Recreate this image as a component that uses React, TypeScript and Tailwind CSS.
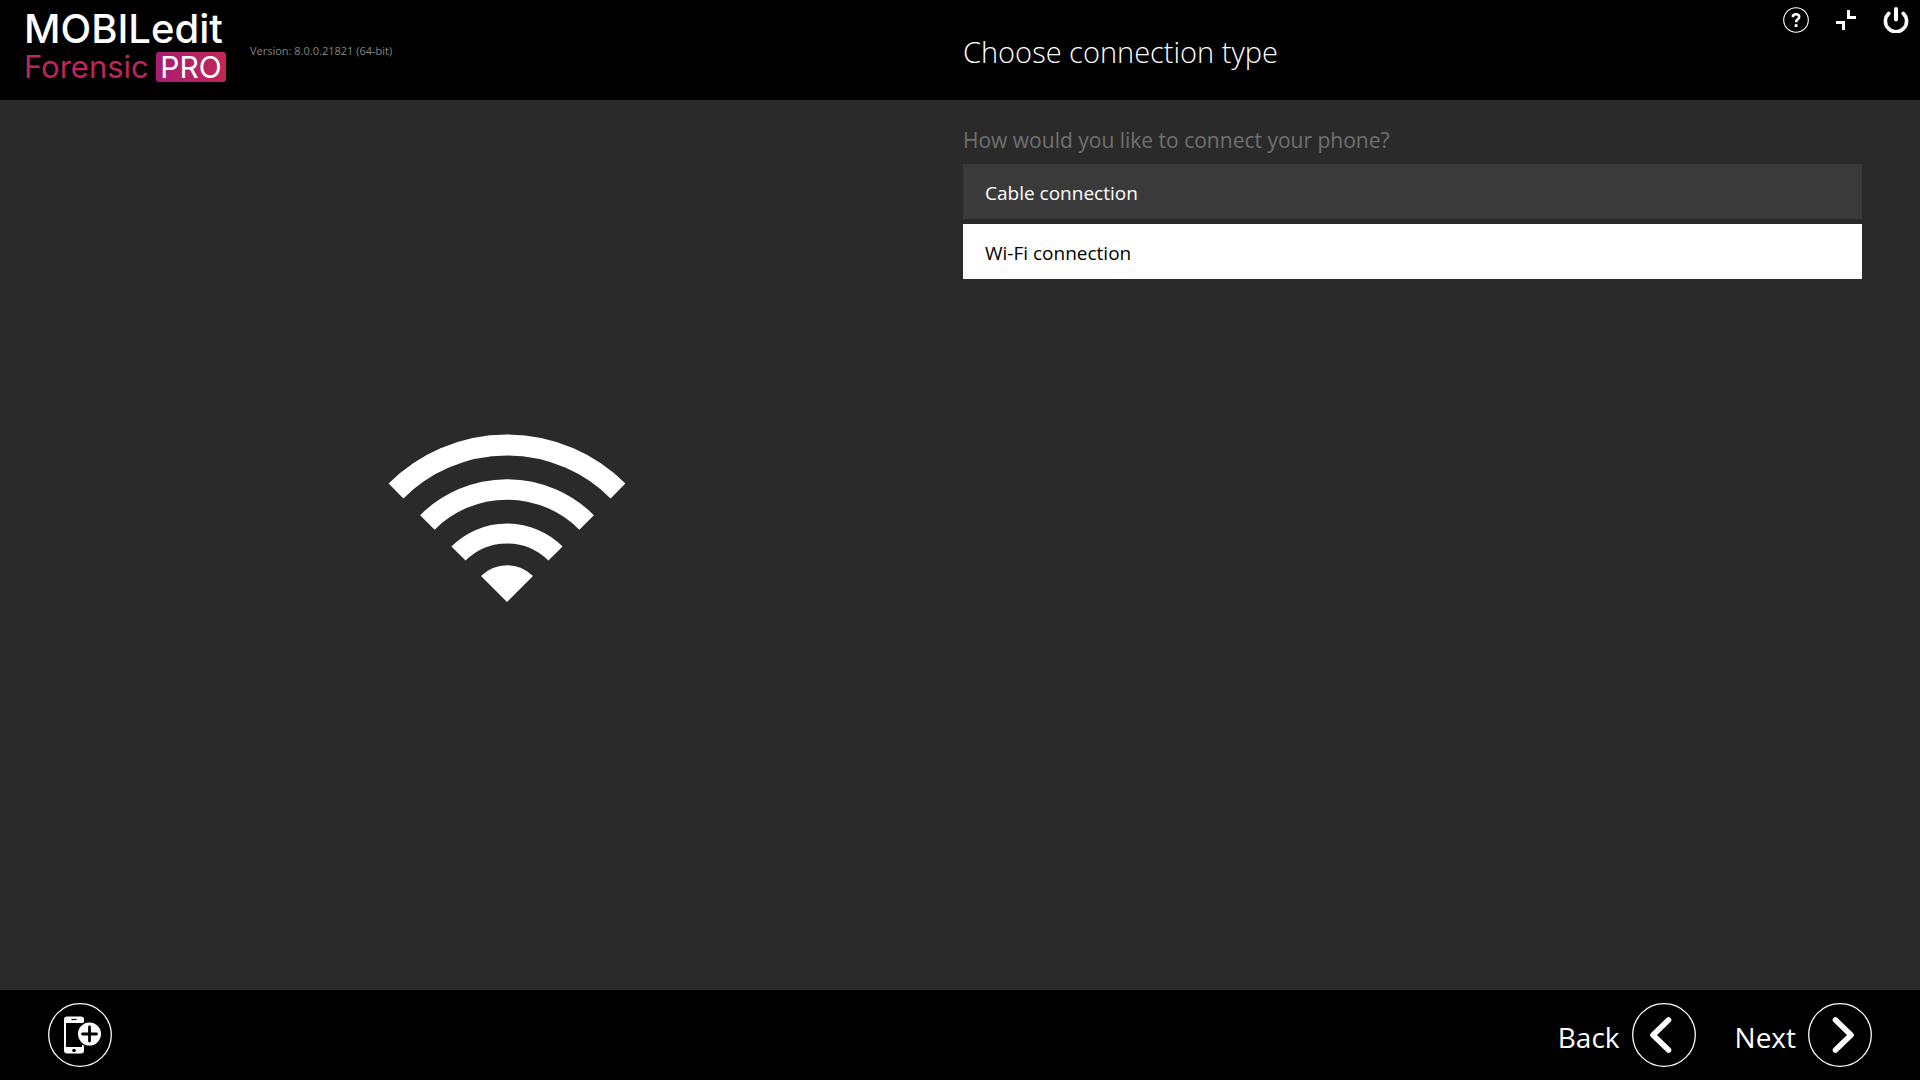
import { useState } from "react";
import clsx from "clsx";

type ConnectionType = "cable" | "wifi";

const CONNECTIONS: { id: ConnectionType; label: string }[] = [
  { id: "cable", label: "Cable connection" },
  { id: "wifi", label: "Wi-Fi connection" },
];

function Logo() {
  return (
    <div className="w-[202px] font-['Inter',sans-serif]">
      <div className="text-[40px] leading-[34px] font-medium whitespace-nowrap">MOBILedit</div>
      <div className="mt-[6px] flex items-center justify-between whitespace-nowrap">
        <span className="text-[31px] leading-[30px] text-[#c0245c]">Forensic</span>
        <span className="flex h-[30px] w-[70px] items-center justify-center rounded-[3px] bg-linear-to-r from-[#a81c74] to-[#c22653] text-[30px] leading-[30px]">
          PRO
        </span>
      </div>
    </div>
  );
}

function HelpIcon() {
  return (
    <svg viewBox="0 0 26 26" className="size-[26px]" fill="none" stroke="currentColor">
      <circle cx="13" cy="13" r="12.3" strokeWidth="1.1" />
      <path d="M9.8 10.2c0-1.9 1.4-2.9 3.2-2.9 1.9 0 3.2 1.1 3.2 2.7 0 2.3-3.1 2.4-3.1 5.2" strokeWidth="2.5" />
      <path d="M11.7 17.2h2.8v2.8h-2.8z" fill="currentColor" stroke="none" />
    </svg>
  );
}

function CollapseIcon() {
  return (
    <svg viewBox="0 0 26 26" className="size-[26px]" fill="none" stroke="currentColor" strokeWidth="3">
      <path d="M15.5 3v7.5H23" />
      <path d="M3 15.5h7.5V23" />
    </svg>
  );
}

function PowerIcon() {
  return (
    <svg viewBox="0 0 26 26" className="size-[26px]" fill="none" stroke="currentColor" strokeLinecap="round">
      <path d="M13 2v10.5" strokeWidth="4" />
      <path d="M5.8 6.4a10.6 10.6 0 1 0 14.4 0" strokeWidth="3.6" />
    </svg>
  );
}

function WifiIcon() {
  return (
    <svg viewBox="0 0 240 168" className="w-[240px]" fill="none" stroke="currentColor">
      <path d="M9 57a157 157 0 0 1 222 0" strokeWidth="21" />
      <path d="M40.4 88.4a112.6 112.6 0 0 1 159.2 0" strokeWidth="20.5" />
      <path d="M71.5 119.5a68.6 68.6 0 0 1 97 0" strokeWidth="20" />
      <path d="M120 168L94 142a36.8 36.8 0 0 1 52 0z" fill="currentColor" stroke="none" />
    </svg>
  );
}

function AddPhoneIcon() {
  return (
    <svg viewBox="0 0 64 64" className="size-16" fill="none" stroke="currentColor">
      <circle cx="32" cy="32" r="31.3" strokeWidth="1.3" />
      <rect x="16" y="13.5" width="20" height="37" rx="3" fill="currentColor" stroke="none" />
      <path d="M18 20h16v24H18z" fill="#000" stroke="none" />
      <path d="M23.5 16.5h5" stroke="#000" strokeWidth="1.2" />
      <circle cx="26" cy="47.5" r="1.8" fill="#000" stroke="none" />
      <circle cx="41.5" cy="31" r="12.2" fill="currentColor" stroke="#000" strokeWidth="1.4" />
      <path d="M41.5 24v14M34.5 31h14" stroke="#000" strokeWidth="2.8" strokeLinecap="round" />
    </svg>
  );
}

function ArrowIcon({ d }: { d: string }) {
  return (
    <svg viewBox="0 0 64 64" className="size-16" fill="none" stroke="currentColor">
      <circle cx="32" cy="32" r="31.3" strokeWidth="1.3" />
      <path d={d} strokeWidth="5.6" strokeLinecap="round" strokeLinejoin="round" />
    </svg>
  );
}

export default function App() {
  const [selected, setSelected] = useState<ConnectionType>("wifi");

  return (
    <div className="flex min-h-screen flex-col bg-[#2a2a2a] font-['Open_Sans','Noto_Sans',sans-serif] text-white">
      <header className="grid h-[100px] grid-cols-2 gap-[14px] bg-black pr-[58px] pl-[50px]">
        <div className="-ml-[26px] flex items-start gap-6 pt-3">
          <Logo />
          <span className="pt-[30px] text-[11px] leading-[18px] text-[#858585]">Version: 8.0.0.21821 (64-bit)</span>
        </div>
        <div className="-mr-[47px] flex items-start justify-between">
          <h1 className="pt-8 text-[29px] leading-10 font-light">Choose connection type</h1>
          <div className="flex gap-6 pt-[7px]">
            <button aria-label="Help"><HelpIcon /></button>
            <button aria-label="Exit full screen"><CollapseIcon /></button>
            <button aria-label="Quit"><PowerIcon /></button>
          </div>
        </div>
      </header>

      <main className="grid flex-1 grid-cols-2 gap-[14px] pr-[58px] pl-[50px]">
        <div className="flex items-center justify-center pb-[54px] pl-[14px]">
          <WifiIcon />
        </div>
        <section className="pt-6">
          <h2 className="text-[21px] leading-8 text-[#707070]">How would you like to connect your phone?</h2>
          <div className="mt-2 flex flex-col gap-[5px]">
            {CONNECTIONS.map((c) => (
              <button
                key={c.id}
                onClick={() => setSelected(c.id)}
                aria-pressed={selected === c.id}
                className={clsx(
                  "h-[55px] px-[22px] pt-[2px] text-left text-[19px] leading-7",
                  selected === c.id ? "bg-white text-black" : "bg-[#3a3a3a] text-white"
                )}
              >
                {c.label}
              </button>
            ))}
          </div>
        </section>
      </main>

      <footer className="flex h-[90px] items-center justify-between bg-black px-12">
        <button aria-label="Add phone"><AddPhoneIcon /></button>
        <div className="flex gap-[39px]">
          <button className="flex items-center gap-3">
            <span className="pt-1 text-[28px] leading-10">Back</span>
            <ArrowIcon d="M36.5 17L21 32l15.5 15" />
          </button>
          <button className="flex items-center gap-3">
            <span className="pt-1 text-[28px] leading-10">Next</span>
            <ArrowIcon d="M27.5 17L43 32l-15.5 15" />
          </button>
        </div>
      </footer>
    </div>
  );
}
